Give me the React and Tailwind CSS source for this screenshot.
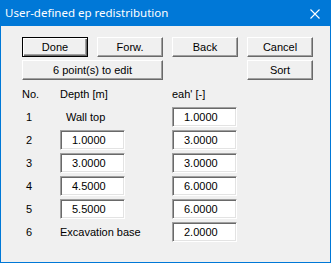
import React from "react";

const BTN =
  "h-[20px] w-[66px] bg-[#f0f0f0] text-[11px] leading-none text-black border border-t-white border-l-white border-r-[#696969] border-b-[#696969] shadow-[inset_-1px_-1px_0_#a0a0a0] flex items-center justify-center";

const Button = ({ label, wide, isDefault }) => (
  <div
    className={
      isDefault
        ? "h-[20px] w-[66px] bg-[#f0f0f0] text-[11px] leading-none text-black border border-black shadow-[inset_1px_1px_0_#fff,inset_-1px_-1px_0_#696969,inset_-2px_-2px_0_#a0a0a0] flex items-center justify-center"
        : wide
        ? "h-[20px] w-[141px] bg-[#f0f0f0] text-[11px] leading-none text-black border border-t-white border-l-white border-r-[#696969] border-b-[#696969] shadow-[inset_-1px_-1px_0_#a0a0a0] flex items-center justify-center"
        : BTN
    }
  >
    {label}
  </div>
);

const Field = ({ value }) => (
  <div className="h-[20px] w-[65px] bg-white border border-t-[#a0a0a0] border-l-[#a0a0a0] border-r-white border-b-white shadow-[inset_1px_1px_0_#696969,inset_-1px_-1px_0_#e3e3e3] flex items-center pl-[11px] text-[11px] leading-none">
    {value}
  </div>
);

const rows = [
  { no: "1", depth: "Wall top", eah: "1.0000" },
  { no: "2", depth: "1.0000", eah: "3.0000", edit: true },
  { no: "3", depth: "3.0000", eah: "3.0000", edit: true },
  { no: "4", depth: "4.5000", eah: "6.0000", edit: true },
  { no: "5", depth: "5.5000", eah: "6.0000", edit: true },
  { no: "6", depth: "Excavation base", eah: "2.0000" },
];

export default function App() {
  return (
    <div
      className="w-[331px] h-[263px] bg-[#0078d7] flex flex-col"
      style={{ fontFamily: '"Liberation Sans", Arial, sans-serif' }}
    >
      {/* title bar */}
      <div className="h-[26px] flex items-center justify-between pl-[5px] pr-[11px] text-white">
        <span
          className="text-[11.5px] leading-none"
          style={{ fontFamily: '"Noto Sans", "Open Sans", sans-serif' }}
        >
          User-defined ep redistribution
        </span>
        <svg width="10" height="10" viewBox="0 0 10 10" className="mt-[1px]">
          <path d="M0.5 0.5 L9.5 9.5 M9.5 0.5 L0.5 9.5" stroke="#fff" strokeWidth="1.1" />
        </svg>
      </div>

      {/* body */}
      <div className="flex-1 mx-px mb-px bg-[#f0f0f0] pt-[11px] pl-[21px] text-black">
        <div className="flex gap-[9px]">
          <Button label="Done" isDefault />
          <Button label="Forw." />
          <Button label="Back" />
          <Button label="Cancel" />
        </div>
        <div className="flex gap-[84px] mt-[3px]">
          <Button label="6 point(s) to edit" wide />
          <Button label="Sort" />
        </div>

        <div className="flex items-center h-[20px] mt-[4px] text-[11px] leading-none">
          <span className="w-[38px]">No.</span>
          <span className="w-[112px]">Depth [m]</span>
          <span>eah' [-]</span>
        </div>

        <div className="flex flex-col gap-[3px] mt-[3px]">
          {rows.map((r) => (
            <div key={r.no} className="flex items-center h-[20px] text-[11px] leading-none">
              <span className="w-[38px] pl-[4px]">{r.no}</span>
              <div className="w-[112px]">
                {r.edit ? (
                  <Field value={r.depth} />
                ) : (
                  <span className={r.no === "1" ? "pl-[6px]" : ""}>{r.depth}</span>
                )}
              </div>
              <Field value={r.eah} />
            </div>
          ))}
        </div>
      </div>
    </div>
  );
}
